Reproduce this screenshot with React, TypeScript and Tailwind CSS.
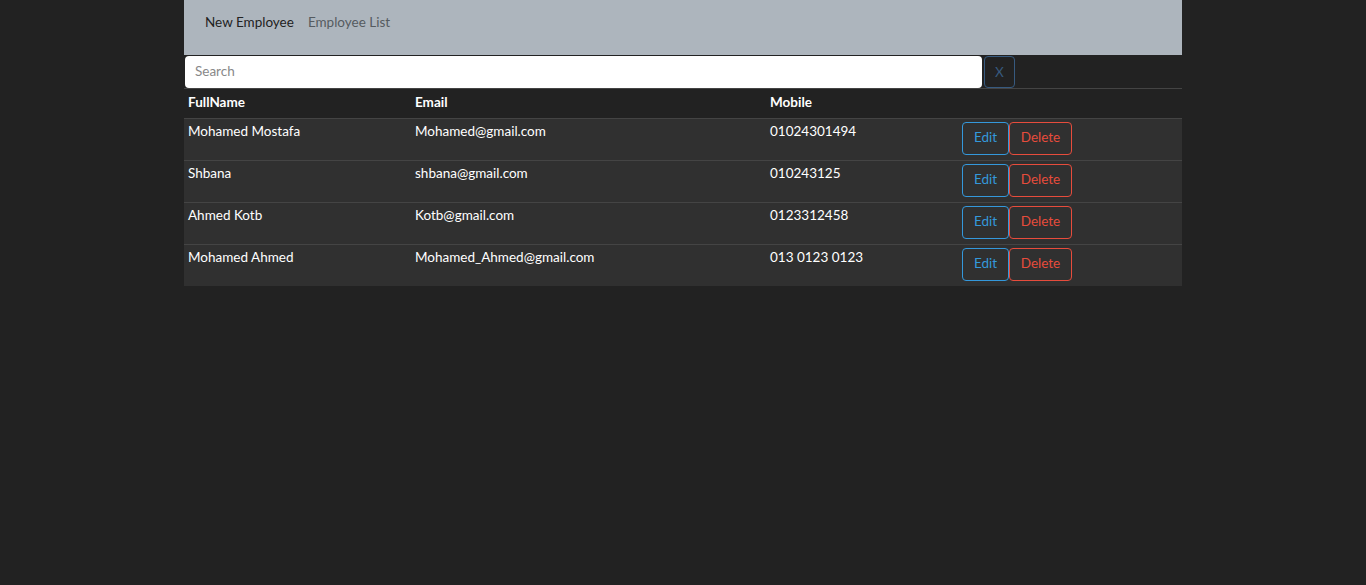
import React from "react";

const rows = [
  { name: "Mohamed Mostafa", email: "Mohamed@gmail.com", mobile: "01024301494" },
  { name: "Shbana", email: "shbana@gmail.com", mobile: "010243125" },
  { name: "Ahmed Kotb", email: "Kotb@gmail.com", mobile: "0123312458" },
  { name: "Mohamed Ahmed", email: "Mohamed_Ahmed@gmail.com", mobile: "013 0123 0123" },
];

export default function App() {
  return (
    <div
      className="min-h-[585px] bg-[#222222] text-white text-[13.5px] leading-[22px]"
      style={{ fontFamily: "Lato, 'Noto Sans', sans-serif" }}
    >
      <div className="mx-auto w-[998px]">
        <nav className="h-[55px] bg-[#adb5bd] flex items-start pt-[11px] px-[21px] gap-[14px]">
          <span className="text-[#222222]">New Employee</span>
          <span className="text-[#555b60]">Employee List</span>
        </nav>
        <div className="flex items-start gap-[2px] h-[34px] pt-[1px] pl-[1px] border-b border-[#444444]">
          <input
            placeholder="Search"
            className="w-[797px] h-[32px] rounded-[4px] bg-white px-[10px] pb-[3px] text-[13.5px] text-[#222] placeholder:text-[#888888] outline-none"
          />
          <button className="w-[31px] h-[32px] rounded-[4px] border border-[#375a7f] text-[#375a7f] flex items-center justify-center">
            X
          </button>
        </div>
        <table className="w-full border-collapse">
          <thead>
            <tr className="text-left h-[29px]">
              <th className="w-[227px] px-[4px] pt-[2px] pb-0 align-top font-bold">FullName</th>
              <th className="w-[355px] px-[4px] pt-[2px] pb-0 align-top font-bold">Email</th>
              <th className="w-[192px] px-[4px] pt-[2px] pb-0 align-top font-bold">Mobile</th>
              <th className="px-[4px] pt-[2px] pb-0"></th>
            </tr>
          </thead>
          <tbody>
            {rows.map((r) => (
              <tr key={r.name} className="bg-[#303030] border-t border-[#444444] align-top h-[42px]">
                <td className="px-[4px] pt-[1px] pb-0">{r.name}</td>
                <td className="px-[4px] pt-[1px] pb-0">{r.email}</td>
                <td className="px-[4px] pt-[1px] pb-0">{r.mobile}</td>
                <td className="px-[4px] pt-[3px] pb-0">
                  <div className="flex">
                    <button className="w-[47px] h-[33px] pb-[2px] rounded-[4px] border border-[#3498db] text-[#3498db]">
                      Edit
                    </button>
                    <button className="w-[63px] h-[33px] pb-[2px] rounded-[4px] border border-[#e74c3c] text-[#e74c3c]">
                      Delete
                    </button>
                  </div>
                </td>
              </tr>
            ))}
          </tbody>
        </table>
      </div>
    </div>
  );
}
